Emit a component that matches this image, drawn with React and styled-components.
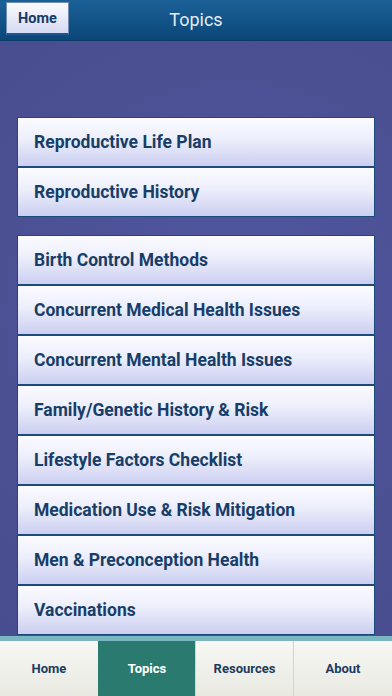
import styled, { createGlobalStyle } from "styled-components";

const GlobalStyle = createGlobalStyle`
  html, body {
    margin: 0;
    padding: 0;
    height: 100%;
    overflow: hidden;
  }
  body {
    font-family: Roboto, "Liberation Sans", sans-serif;
    background: #4b5093;
  }
`;

const groups = [
  ["Reproductive Life Plan", "Reproductive History"],
  [
    "Birth Control Methods",
    "Concurrent Medical Health Issues",
    "Concurrent Mental Health Issues",
    "Family/Genetic History & Risk",
    "Lifestyle Factors Checklist",
    "Medication Use & Risk Mitigation",
    "Men & Preconception Health",
    "Vaccinations",
  ],
];

const tabs = ["Home", "Topics", "Resources", "About"];

function App() {
  return (
    <Screen>
      <GlobalStyle />
      <Header>
        <HomeButton>Home</HomeButton>
        <Title>Topics</Title>
      </Header>
      <Content>
        {groups.map((items, i) => (
          <Group key={i}>
            {items.map((label) => (
              <TopicRow key={label}>{label}</TopicRow>
            ))}
          </Group>
        ))}
      </Content>
      <TabBar>
        {tabs.map((t) => (
          <Tab key={t} $active={t === "Topics"}>
            {t}
          </Tab>
        ))}
      </TabBar>
    </Screen>
  );
}

export default App;

const Screen = styled.div`
  width: 392px;
  height: 696px;
  display: flex;
  flex-direction: column;
  background: radial-gradient(circle at 60% 45%, #5157a0 0%, #4b5093 55%, #474c8e 100%);
  overflow: hidden;
`;

const Header = styled.header`
  height: 41px;
  flex-shrink: 0;
  position: relative;
  display: flex;
  align-items: center;
  justify-content: center;
  background: linear-gradient(#1b6198, #0b4678);
  box-sizing: border-box;
  border-bottom: 1px solid #0a3c68;
`;

const HomeButton = styled.div`
  position: absolute;
  left: 6px;
  top: 2px;
  width: 63px;
  height: 33px;
  box-sizing: border-box;
  display: flex;
  align-items: center;
  justify-content: center;
  background: linear-gradient(#fafbff, #d6d9f2);
  border: 1px solid #6f8fb6;
  border-bottom: 2px solid #1a5690;
  font-weight: 700;
  font-size: 14.5px;
  color: #163a62;
`;

const Title = styled.div`
  color: #e3ecf6;
  font-size: 18px;
  font-weight: 400;
  margin-top: -2px;
`;

const Content = styled.main`
  flex: 1;
  min-height: 0;
  overflow: hidden;
  padding: 76px 17px 0;
  display: flex;
  flex-direction: column;
  gap: 18px;
`;

const Group = styled.div`
  display: flex;
  flex-direction: column;
`;

const TopicRow = styled.div`
  height: 50px;
  flex-shrink: 0;
  box-sizing: border-box;
  border: 1px solid #1d4a7c;
  background: linear-gradient(#fbfbff 0%, #eceefb 45%, #cbcff0 100%);
  display: flex;
  align-items: center;
  padding-left: 16px;
  font-weight: 700;
  font-size: 17.5px;
  color: #173d68;
`;

const TabBar = styled.nav`
  height: 60px;
  flex-shrink: 0;
  box-sizing: border-box;
  border-top: 5px solid #7bb7c2;
  display: grid;
  grid-template-columns: 98px 97px 98px 99px;
  background: linear-gradient(#f8f8f4, #e9e9e2);
`;

const Tab = styled.div`
  display: flex;
  align-items: center;
  justify-content: center;
  font-weight: 700;
  font-size: 13px;
  color: ${(p) => (p.$active ? "#ffffff" : "#1c3b60")};
  background: ${(p) => (p.$active ? "#2b7a70" : "transparent")};
  border-left: 1px solid ${(p) => (p.$active ? "#2b7a70" : "#d4d4cc")};
  &:first-child {
    border-left: none;
  }
`;
